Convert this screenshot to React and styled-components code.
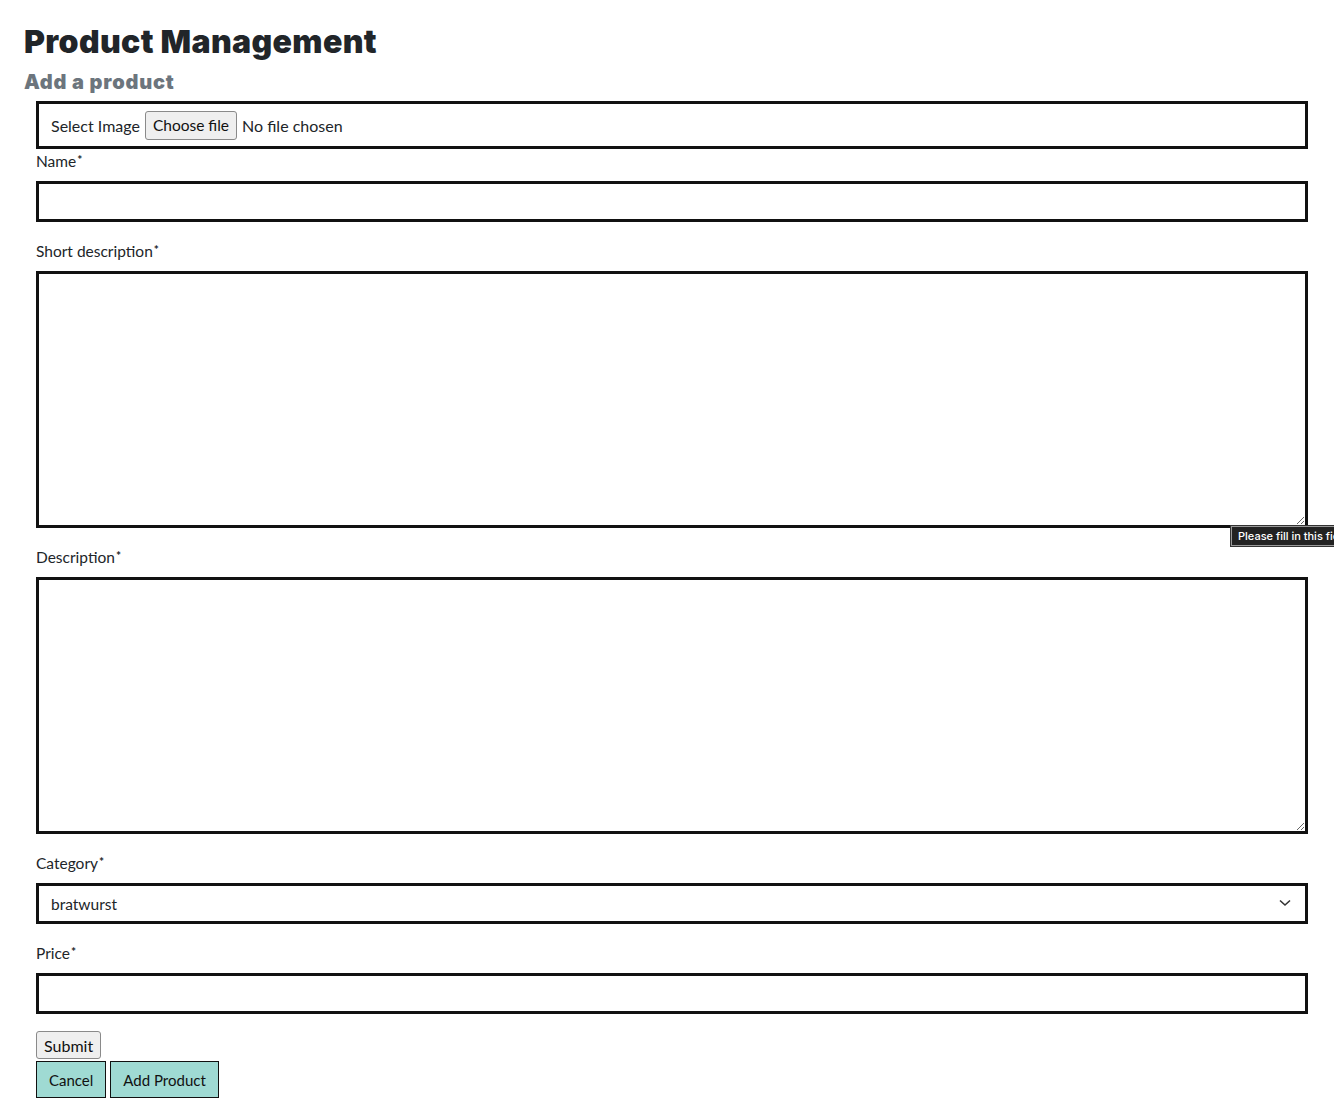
import React from "react";
import styled, { createGlobalStyle } from "styled-components";

const Global = createGlobalStyle`
  html, body { margin: 0; padding: 0; background: #fff; overflow: hidden; }
  body { font-family: "Lato", "Noto Sans", sans-serif; color: #212529; }
  * { box-sizing: border-box; }
`;

const Page = styled.div`
  position: relative;
  width: 1334px;
  min-height: 1110px;
  padding: 22px 26px 0 24px;
`;

const Title = styled.h1`
  margin: 0;
  font-family: "Inter", sans-serif;
  font-weight: 900;
  font-size: 32px;
  line-height: 40px;
  letter-spacing: 0.35px;
  color: #212529;
`;

const Subtitle = styled.h2`
  margin: 7px 0 6px;
  font-family: "Inter", sans-serif;
  font-weight: 900;
  font-size: 20px;
  line-height: 26px;
  letter-spacing: 0.8px;
  color: #6c757d;
`;

const Form = styled.form`
  display: flex;
  flex-direction: column;
  margin-left: 12px;
`;

const FileBox = styled.div`
  display: flex;
  align-items: center;
  gap: 5px;
  height: 48px;
  padding: 0 12px;
  border: 3px solid #111;
  font-size: 16px;
`;

const FakeButton = styled.span`
  display: inline-flex;
  align-items: center;
  height: 29px;
  padding: 0 7px;
  background: #efefef;
  border: 1px solid #8a8a8a;
  border-radius: 3px;
  font-size: 15.5px;
  color: #111;
`;

const Group = styled.div`
  display: flex;
  flex-direction: column;
  margin-bottom: ${(p) => (p.$last ? "17px" : "17px")};
`;

const Label = styled.label`
  display: block;
  height: 24px;
  font-size: 15.5px;
  line-height: 24px;
  margin-bottom: 8px;
  color: #212529;
`;

const Star = styled.span`
  position: relative;
  top: -3px;
  font-size: 12px;
  font-weight: 700;
  margin-left: 1px;
`;

const fieldBase = `
  width: 100%;
  border: 3px solid #111;
  border-radius: 0;
  background: #fff;
  font-family: "Lato", sans-serif;
  font-size: 15.5px;
  outline: none;
`;

const Input = styled.input`
  ${fieldBase}
  height: 41px;
  padding: 0 12px;
`;

const TextArea = styled.textarea`
  ${fieldBase}
  height: 257px;
  padding: 8px 12px;
  resize: vertical;
  display: block;
`;

const SelectWrap = styled.div`
  position: relative;
`;

const Select = styled.select`
  ${fieldBase}
  appearance: none;
  height: 41px;
  padding: 0 12px;
  color: #212529;
`;

const Chevron = styled.svg`
  position: absolute;
  right: 17px;
  top: 16px;
  pointer-events: none;
`;

const SubmitButton = styled.button`
  align-self: flex-start;
  height: 28px;
  padding: 0 7px;
  background: #efefef;
  border: 1px solid #8a8a8a;
  border-radius: 3px;
  font-family: "Lato", sans-serif;
  font-size: 16px;
  color: #111;
  margin-bottom: 2px;
`;

const Actions = styled.div`
  display: flex;
  gap: 4px;
`;

const ActionButton = styled.button`
  height: 37px;
  padding: 0 12px;
  background: #9fdad3;
  border: 1px solid #111;
  border-radius: 0;
  font-family: "Lato", sans-serif;
  font-size: 15px;
  color: #111;
`;

const Tooltip = styled.div`
  position: absolute;
  left: 1231px;
  top: 526px;
  height: 20px;
  padding: 0 6px;
  display: flex;
  align-items: center;
  background: #222;
  border: 1px solid #999;
  box-shadow: 0 0 0 1px #333;
  color: #fff;
  font-family: "Inter", "Liberation Sans", sans-serif;
  font-size: 11px;
  font-weight: 500;
  white-space: nowrap;
`;

const Req = ({ children }) => (
  <Label>
    {children}
    <Star>*</Star>
  </Label>
);

export default function App() {
  return (
    <>
      <Global />
      <Page>
        <Title>Product Management</Title>
        <Subtitle>Add a product</Subtitle>
        <Form onSubmit={(e) => e.preventDefault()}>
          <FileBox>
            <span>Select Image</span>
            <FakeButton>Choose file</FakeButton>
            <span>No file chosen</span>
          </FileBox>
          <Group>
            <Req>Name</Req>
            <Input type="text" />
          </Group>
          <Group>
            <Req>Short description</Req>
            <TextArea />
          </Group>
          <Group>
            <Req>Description</Req>
            <TextArea />
          </Group>
          <Group>
            <Req>Category</Req>
            <SelectWrap>
              <Select defaultValue="bratwurst">
                <option value="bratwurst">bratwurst</option>
              </Select>
              <Chevron width="12" height="8" viewBox="0 0 12 8">
                <path d="M1 1.5 L6 6 L11 1.5" fill="none" stroke="#333" strokeWidth="1.6" />
              </Chevron>
            </SelectWrap>
          </Group>
          <Group $last>
            <Req>Price</Req>
            <Input type="text" />
          </Group>
          <SubmitButton type="submit">Submit</SubmitButton>
          <Actions>
            <ActionButton type="button">Cancel</ActionButton>
            <ActionButton type="button">Add Product</ActionButton>
          </Actions>
        </Form>
        <Tooltip>Please fill in this field.</Tooltip>
      </Page>
    </>
  );
}
